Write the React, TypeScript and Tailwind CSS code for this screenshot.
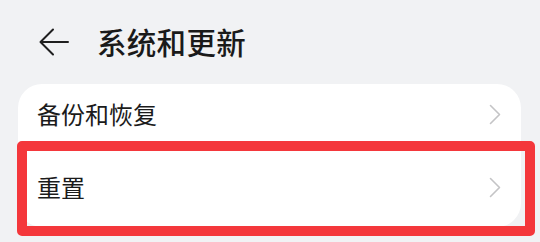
import React from 'react';

function Chevron() {
  return (
    <svg width="12" height="21" viewBox="0 0 12 21" fill="none" className="shrink-0">
      <path d="M1.5 1.5 L10.5 10.5 L1.5 19.5" stroke="#c4c4c6" strokeWidth="1.6" strokeLinecap="round" strokeLinejoin="round" />
    </svg>
  );
}

function Row({ label, className }: { label: string; className: string }) {
  return (
    <div className={`flex items-center justify-between pl-[19px] pr-[20px] ${className}`}>
      <span className="text-[24px] leading-none text-[#1b1b1b]">{label}</span>
      <Chevron />
    </div>
  );
}

export default function App() {
  return (
    <div
      className="relative w-[540px] h-[242px] overflow-hidden bg-[#f1f2f4]"
      style={{ fontFamily: '"Noto Sans CJK SC", "Noto Sans", sans-serif' }}
    >
      {/* Header */}
      <div className="flex items-center h-[84px] pl-[39px]">
        <svg width="30" height="28" viewBox="0 0 30 28" fill="none" className="shrink-0">
          <path d="M29 14 H2 M14 1.5 L1.5 14 L14 26.5" stroke="#1f1f1f" strokeWidth="2" strokeLinecap="round" strokeLinejoin="round" />
        </svg>
        <h1 className="ml-[28px] text-[29.5px] leading-none font-medium text-[#1a1a1a] tracking-[0.3px]">系统和更新</h1>
      </div>

      {/* Card */}
      <div className="ml-[18px] w-[503px] bg-white rounded-[24px] pb-[3px]">
        <Row label="备份和恢复" className="h-[66px] pb-[6px]" />
        <Row label="重置" className="h-[74px]" />
      </div>

      {/* Highlight annotation */}
      <div className="absolute left-[17px] top-[141px] w-[518px] h-[95px] border-[10.5px] border-[#f4373b] rounded-[5px]" />
    </div>
  );
}
